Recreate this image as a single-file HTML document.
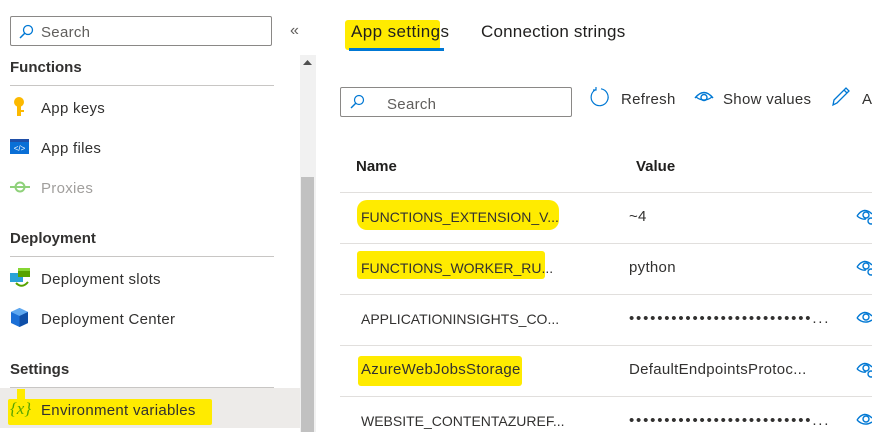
<!DOCTYPE html>
<html><head><meta charset="utf-8"><style>
*{margin:0;padding:0;box-sizing:border-box}
body{width:872px;height:432px;overflow:hidden;background:#fff;font-family:"Liberation Sans",sans-serif;color:#323130;position:relative}
.a{position:absolute;white-space:nowrap}
.t{font-size:15px;line-height:18px;letter-spacing:0.3px}
.r{font-size:14px;line-height:18px}
.h{font-size:15px;font-weight:bold;line-height:18px}
.hl{position:absolute;background:#ffeb00;border-radius:3px}
.ln{position:absolute;height:1px;background:#e1dfdd}
</style></head><body>
<!-- sidebar -->
<div class="a" style="left:10px;top:16px;width:262px;height:30px;border:1px solid #8a8886;border-radius:2px"></div>
<svg class="a" style="left:18px;top:24px" width="16" height="16" viewBox="0 0 16 16"><circle cx="10" cy="6" r="4.5" fill="none" stroke="#0078d4" stroke-width="1.3"/><path d="M7 9L2 14" stroke="#0078d4" stroke-width="1.5"/></svg>
<div class="a t" style="left:41px;top:24px;color:#605e5c">Search</div>
<div class="a" style="left:290px;top:22px;font-size:16px;color:#605e5c">«</div>
<div class="a" style="left:300px;top:55px;width:16px;height:377px;background:#f1f1f1"></div>
<div class="a" style="left:301px;top:177px;width:13px;height:255px;background:#c1c1c1"></div>
<svg class="a" style="left:303px;top:60px" width="9" height="6"><path d="M0 5L4.5 0L9 5Z" fill="#505050"/></svg>

<div class="a h" style="left:10px;top:59px">Functions</div>
<div class="ln" style="left:10px;top:85px;width:264px;background:#c8c6c4"></div>
<svg class="a" style="left:11px;top:97px" width="16" height="20" viewBox="0 0 16 20"><circle cx="8" cy="5" r="5" fill="#fcb900"/><rect x="6" y="8" width="4" height="11" fill="#fcb900"/><rect x="10" y="13" width="3" height="2" fill="#fcb900"/></svg>
<div class="a t" style="left:41px;top:100px">App keys</div>
<svg class="a" style="left:10px;top:139px" width="19" height="15"><rect width="19" height="15" fill="#0a6fd6"/><rect y="0" width="19" height="3" fill="#1f4fa8"/><text x="9.5" y="12" font-size="8" fill="#fff" text-anchor="middle" font-family="Liberation Sans">&lt;/&gt;</text></svg>
<div class="a t" style="left:41px;top:140px">App files</div>
<svg class="a" style="left:10px;top:180px" width="20" height="14"><circle cx="10" cy="7" r="4.5" fill="none" stroke="#8fd17a" stroke-width="2"/><path d="M0 7h20" stroke="#8fd17a" stroke-width="2"/></svg>
<div class="a t" style="left:41px;top:180px;color:#a19f9d">Proxies</div>

<div class="a h" style="left:10px;top:230px">Deployment</div>
<div class="ln" style="left:10px;top:256px;width:264px;background:#c8c6c4"></div>
<svg class="a" style="left:10px;top:268px" width="20" height="20"><rect x="0" y="5" width="13" height="9" fill="#2aa3d8"/><rect x="8" y="0" width="12" height="9" fill="#57a300"/><rect x="8" y="0" width="12" height="3" fill="#86d633"/><path d="M6 15 Q12 21 18 14" fill="none" stroke="#57a300" stroke-width="2"/></svg>
<div class="a t" style="left:41px;top:271px">Deployment slots</div>
<svg class="a" style="left:11px;top:308px" width="17" height="19"><path d="M8.5 0L17 4V15L8.5 19L0 15V4Z" fill="#1b6fd6"/><path d="M8.5 0L17 4L8.5 8L0 4Z" fill="#5ea8f0"/><path d="M8.5 8L17 4V15L8.5 19Z" fill="#0f4fa8"/></svg>
<div class="a t" style="left:41px;top:311px">Deployment Center</div>

<div class="a h" style="left:10px;top:361px">Settings</div>
<div class="ln" style="left:10px;top:387px;width:264px;background:#c8c6c4"></div>
<div class="a" style="left:0;top:388px;width:300px;height:40px;background:#edebe9"></div>
<div class="hl" style="left:8px;top:399px;width:204px;height:26px;border-radius:2px"></div>
<div class="hl" style="left:17px;top:389px;width:8px;height:12px;border-radius:0"></div>
<div class="a" style="left:10px;top:399px;font-size:17px;color:#57a300;font-family:'Liberation Serif',serif;font-style:italic">{x}</div>
<div class="a t" style="left:41px;top:402px">Environment variables</div>

<!-- main -->
<div class="hl" style="left:345px;top:20px;width:95px;height:30px"></div>
<div class="a" style="left:351px;top:21px;font-size:17px;line-height:22px;color:#201f1e;letter-spacing:0.4px">App settings</div>
<div class="a" style="left:349px;top:48px;width:95px;height:3px;background:#0078d4"></div>
<div class="a" style="left:481px;top:21px;font-size:17px;line-height:22px;color:#201f1e;letter-spacing:0.2px">Connection strings</div>

<div class="a" style="left:340px;top:87px;width:232px;height:30px;border:1px solid #8a8886;border-radius:2px"></div>
<svg class="a" style="left:349px;top:94px" width="16" height="16" viewBox="0 0 16 16"><circle cx="10" cy="6" r="4.5" fill="none" stroke="#0078d4" stroke-width="1.2"/><path d="M7 9L2 14" stroke="#0078d4" stroke-width="1.4"/></svg>
<div class="a t" style="left:387px;top:96px;color:#605e5c">Search</div>
<svg class="a" style="left:589px;top:86px" width="22" height="22" viewBox="0 0 22 22"><path d="M7 3.5A8.5 8.5 0 1 0 12 2.8" fill="none" stroke="#0078d4" stroke-width="1.2"/><path d="M7 1V4H4" fill="none" stroke="#0078d4" stroke-width="1.2"/></svg>
<div class="a t" style="left:621px;top:91px">Refresh</div>
<svg class="a" style="left:694px;top:90px" width="20" height="14" viewBox="0 0 20 14"><path d="M1 8Q10 -3 19 8" fill="none" stroke="#0078d4" stroke-width="1.4"/><path d="M2 7Q10 13 18 7" fill="none" stroke="#0078d4" stroke-width="1.2"/><circle cx="10" cy="7.5" r="3" fill="none" stroke="#0078d4" stroke-width="1.4"/></svg>
<div class="a t" style="left:723px;top:91px">Show values</div>
<svg class="a" style="left:831px;top:86px" width="20" height="21" viewBox="0 0 20 21"><path d="M2 19L3 14L15 2L18 5L6 17Z M13 4L16 7" fill="none" stroke="#0078d4" stroke-width="1.3"/></svg>
<div class="a t" style="left:862px;top:91px">A</div>

<div class="a h" style="left:356px;top:158px;color:#201f1e">Name</div>
<div class="a h" style="left:636px;top:158px;color:#201f1e">Value</div>
<div class="ln" style="left:340px;top:192px;width:532px"></div>
<div class="ln" style="left:340px;top:243px;width:532px"></div>
<div class="ln" style="left:340px;top:294px;width:532px"></div>
<div class="ln" style="left:340px;top:345px;width:532px"></div>
<div class="ln" style="left:340px;top:396px;width:532px"></div>

<div class="hl" style="left:357px;top:200px;width:202px;height:30px;border-radius:10px"></div>
<div class="hl" style="left:357px;top:251px;width:188px;height:28px"></div>
<div class="hl" style="left:358px;top:356px;width:164px;height:30px"></div>

<div class="a r" style="left:361px;top:208px">FUNCTIONS_EXTENSION_V...</div>
<div class="a t" style="left:629px;top:208px">~4</div>
<div class="a r" style="left:361px;top:259px">FUNCTIONS_WORKER_RU...</div>
<div class="a t" style="left:629px;top:259px">python</div>
<div class="a r" style="left:361px;top:310px">APPLICATIONINSIGHTS_CO...</div>
<div class="a t" style="left:629px;top:310px;letter-spacing:1.8px">••••••••••••••••••••••••••...</div>
<div class="a t" style="left:361px;top:361px">AzureWebJobsStorage</div>
<div class="a t" style="left:629px;top:361px">DefaultEndpointsProtoc...</div>
<div class="a r" style="left:361px;top:412px">WEBSITE_CONTENTAZUREF...</div>
<div class="a t" style="left:629px;top:412px;letter-spacing:1.8px">••••••••••••••••••••••••••...</div>

<svg class="a" style="left:856px;top:207px" width="16" height="220" viewBox="0 0 16 220">
<g fill="none" stroke="#0078d4" stroke-width="1.4">
<path d="M1 9Q8 -1 16 7M1 9Q6 13 10 12"/><circle cx="10" cy="8" r="3"/><circle cx="15" cy="14" r="3"/>
<path d="M1 60Q8 50 16 58M1 60Q6 64 10 63"/><circle cx="10" cy="59" r="3"/><circle cx="15" cy="65" r="3"/>
<path d="M1 111Q8 101 16 109M1 111Q8 118 16 113"/><circle cx="10" cy="110" r="3"/>
<path d="M1 162Q8 152 16 160M1 162Q6 166 10 165"/><circle cx="10" cy="161" r="3"/><circle cx="15" cy="167" r="3"/>
<path d="M1 213Q8 203 16 211M1 213Q8 220 16 215"/><circle cx="10" cy="212" r="3"/>
</g></svg>
</body></html>
